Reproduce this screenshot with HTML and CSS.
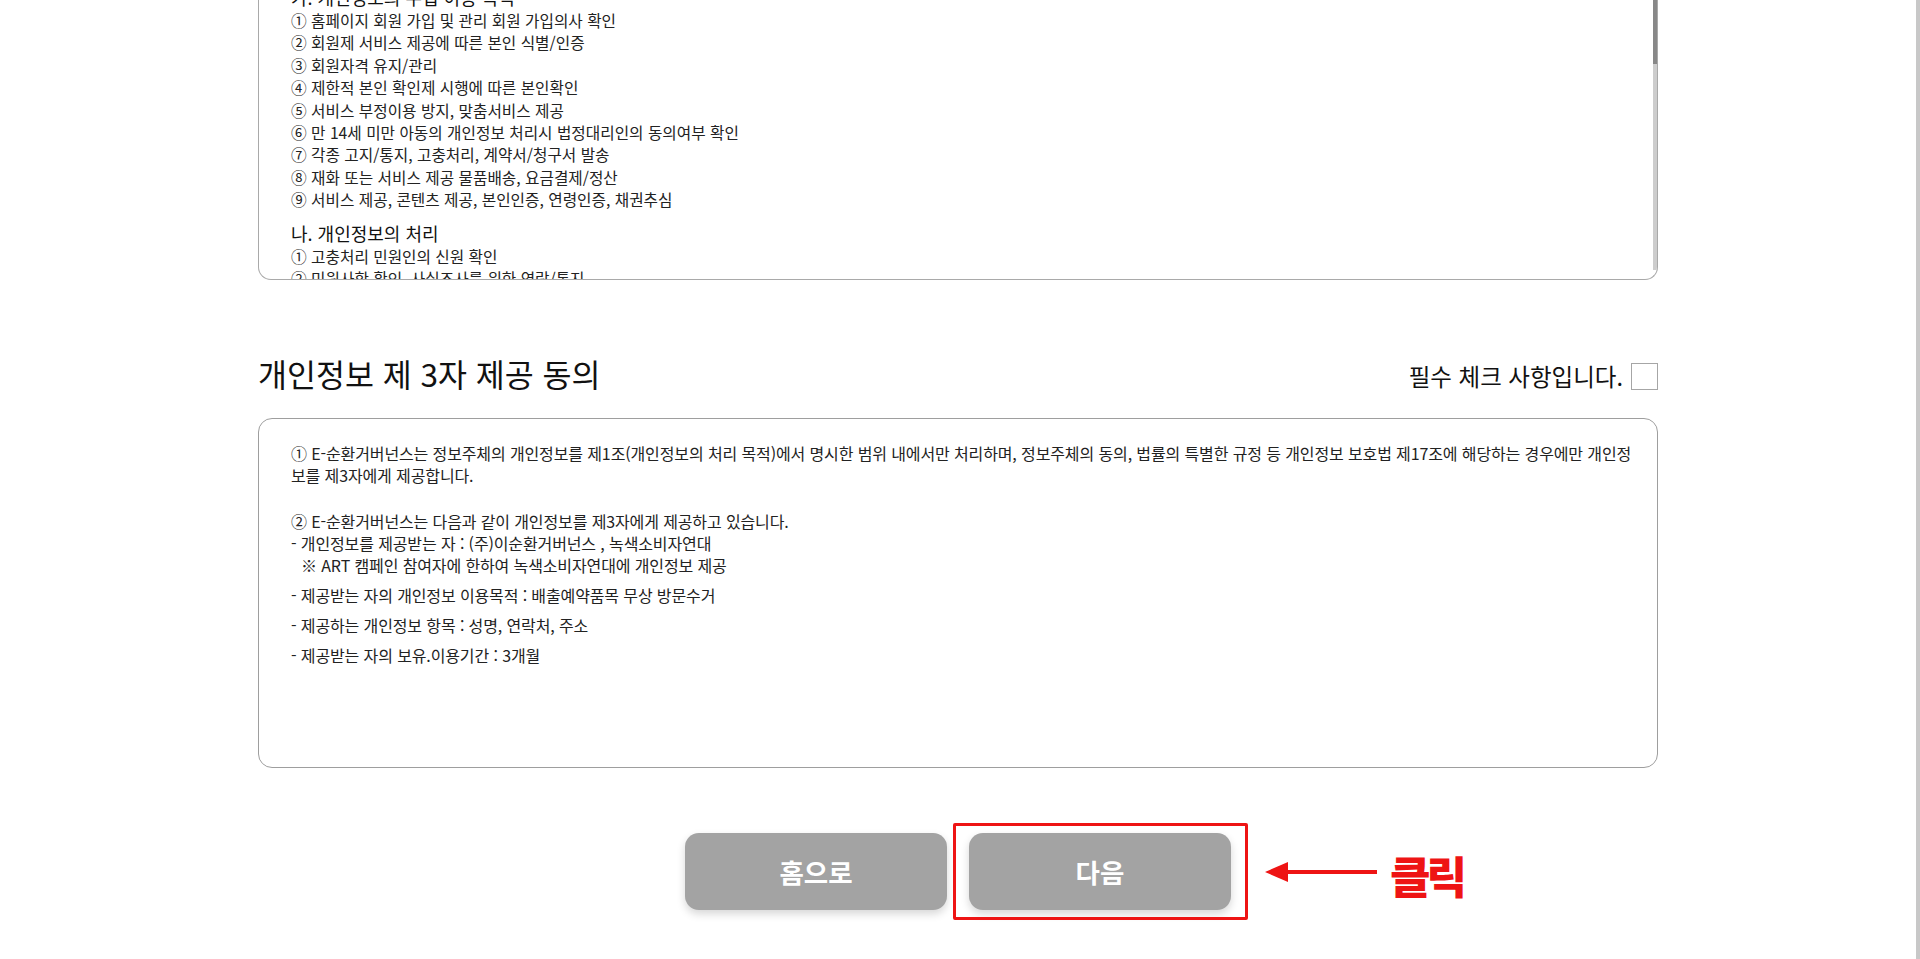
FILE: index.html
```html
<!DOCTYPE html>
<html lang="ko">
<head>
<meta charset="utf-8">
<title>개인정보 제 3자 제공 동의</title>
<link rel="stylesheet" href="styles.css">
</head>
<body>
<div class="page">
  <div class="container">
    <div class="terms-box top-box">
      <div class="terms-inner">
        <h4 class="terms-h">가. 개인정보의 수집·이용 목적</h4>
        <p class="terms-li">① 홈페이지 회원 가입 및 관리 회원 가입의사 확인</p>
        <p class="terms-li">② 회원제 서비스 제공에 따른 본인 식별/인증</p>
        <p class="terms-li">③ 회원자격 유지/관리</p>
        <p class="terms-li">④ 제한적 본인 확인제 시행에 따른 본인확인</p>
        <p class="terms-li">⑤ 서비스 부정이용 방지, 맞춤서비스 제공</p>
        <p class="terms-li">⑥ 만 14세 미만 아동의 개인정보 처리시 법정대리인의 동의여부 확인</p>
        <p class="terms-li">⑦ 각종 고지/통지, 고충처리, 계약서/청구서 발송</p>
        <p class="terms-li">⑧ 재화 또는 서비스 제공 물품배송, 요금결제/정산</p>
        <p class="terms-li">⑨ 서비스 제공, 콘텐츠 제공, 본인인증, 연령인증, 채권추심</p>
        <h4 class="terms-h terms-h-gap">나. 개인정보의 처리</h4>
        <p class="terms-li">① 고충처리 민원인의 신원 확인</p>
        <p class="terms-li">② 민원사항 확인, 사실조사를 위한 연락/통지</p>
        <p class="terms-li">③ 처리결과 통보</p>
      </div>
      <div class="scroll-track"><div class="scroll-thumb"></div></div>
    </div>

    <div class="section-head">
      <h3 class="section-title">개인정보 제 3자 제공 동의</h3>
      <label class="required">
        <span class="required-text">필수 체크 사항입니다.</span>
        <span class="checkbox"></span>
      </label>
    </div>

    <div class="terms-box agree-box">
      <p class="agree-p">① E-순환거버넌스는 정보주체의 개인정보를 제1조(개인정보의 처리 목적)에서 명시한 범위 내에서만 처리하며, 정보주체의 동의, 법률의 특별한 규정 등 개인정보 보호법 제17조에 해당하는 경우에만 개인정<br>보를 제3자에게 제공합니다.</p>
      <p class="agree-p agree-gap">② E-순환거버넌스는 다음과 같이 개인정보를 제3자에게 제공하고 있습니다.<br>- 개인정보를 제공받는 자 : (주)이순환거버넌스 , 녹색소비자연대<br><span class="indent">※ ART 캠페인 참여자에 한하여 녹색소비자연대에 개인정보 제공</span></p>
      <p class="agree-p agree-item">- 제공받는 자의 개인정보 이용목적 : 배출예약품목 무상 방문수거</p>
      <p class="agree-p agree-item">- 제공하는 개인정보 항목 : 성명, 연락처, 주소</p>
      <p class="agree-p agree-item">- 제공받는 자의 보유.이용기간 : 3개월</p>
    </div>

    <div class="btn-row">
      <button class="btn" type="button">홈으로</button>
      <div class="btn-wrap">
        <button class="btn" type="button">다음</button>
        <div class="callout-box"></div>
        <div class="callout">
          <svg class="callout-arrow" width="112" height="22" viewBox="0 0 112 22" aria-hidden="true">
            <polygon points="0,11 23,1 23,21" fill="#ee1414"/>
            <rect x="20" y="9" width="92" height="4" fill="#ee1414"/>
          </svg>
          <span class="callout-text">클릭</span>
        </div>
      </div>
    </div>
  </div>
  <div class="page-scrollbar"></div>
</div>
</body>
</html>
```

FILE: styles.css
```css
html, body {
  margin: 0;
  padding: 0;
  overflow: hidden;
  background: #ffffff;
}

body {
  font-family: "Noto Sans CJK KR", "Noto Sans", sans-serif;
  color: #222222;
}

.page {
  width: 1916px;
  height: 959px;
}

.container {
  width: 1400px;
  margin: 0 auto;
  display: flex;
  flex-direction: column;
}

/* ---------- scroll boxes ---------- */
.terms-box {
  border: 1px solid #a9a9a9;
  background: #fff;
  box-sizing: border-box;
}

.top-box {
  position: relative;
  height: 280px;
  border-top: none;
  border-radius: 0 0 13px 13px;
  overflow: hidden;
}

.terms-inner {
  margin-top: -16px;
  padding-left: 32px;
}

.terms-h {
  margin: 0;
  font-size: 18px;
  font-weight: 400;
  line-height: 26px;
  color: #111;
}

.terms-h-gap {
  margin-top: 8px;
}

.terms-li {
  margin: 0;
  font-size: 15.7px;
  line-height: 22.4px;
  color: #222;
}

.scroll-track {
  position: absolute;
  top: 0;
  right: 0;
  width: 4px;
  height: 270px;
  background: #cdcdcd;
}

.scroll-thumb {
  width: 4px;
  height: 64px;
  background: #888888;
}

/* ---------- section head ---------- */
.section-head {
  margin-top: 73px;
  height: 40px;
  display: flex;
  align-items: center;
  justify-content: space-between;
}

.section-title {
  margin: 0;
  font-size: 31.5px;
  font-weight: 400;
  line-height: 40px;
  color: #111;
}

.required {
  display: flex;
  align-items: center;
  gap: 8px;
  margin-top: 6px;
}

.required-text {
  font-size: 23.5px;
  line-height: 28px;
  color: #111;
}

.checkbox {
  width: 25px;
  height: 25px;
  border: 1px solid #a6a6a6;
  background: #fff;
}

/* ---------- agreement box ---------- */
.agree-box {
  margin-top: 25px;
  height: 350px;
  border-radius: 14px;
  border-color: #9e9e9e;
  padding: 23px 10px 0 32px;
}

.agree-p {
  margin: 0;
  font-size: 16px;
  line-height: 22px;
  color: #222;
  letter-spacing: -0.12px;
  white-space: nowrap;
}

.agree-gap {
  margin-top: 24px;
}

.agree-item {
  margin-top: 8px;
}

.indent {
  padding-left: 10px;
}

/* ---------- buttons ---------- */
.btn-row {
  margin-top: 65px;
  display: flex;
  justify-content: center;
  gap: 22px;
}

.btn-wrap {
  position: relative;
  display: flex;
}

.btn {
  width: 262px;
  height: 77px;
  border: none;
  border-radius: 14px;
  background: #a3a3a3;
  color: #ffffff;
  font-family: "Noto Sans CJK KR", "Noto Sans", sans-serif;
  font-size: 26.5px;
  font-weight: 700;
  box-shadow: 0 4px 8px rgba(0, 0, 0, 0.16);
  padding: 0;
}

.callout-box {
  position: absolute;
  top: -10px;
  bottom: -10px;
  left: -16px;
  right: -17px;
  border: 3px solid #ee1414;
  border-radius: 2px;
}

.callout {
  position: absolute;
  left: calc(100% + 34px);
  top: 50%;
  transform: translateY(-50%);
  display: flex;
  align-items: center;
  gap: 13px;
  white-space: nowrap;
}

.callout-arrow {
  display: block;
  flex: none;
}

.callout-text {
  font-size: 44px;
  font-weight: 900;
  line-height: 46px;
  color: #ee1414;
  letter-spacing: -4px;
  margin-top: 6px;
}

.page-scrollbar {
  position: fixed;
  top: 0;
  right: 0;
  width: 4px;
  height: 100%;
  background: #c8c8c8;
}
```
